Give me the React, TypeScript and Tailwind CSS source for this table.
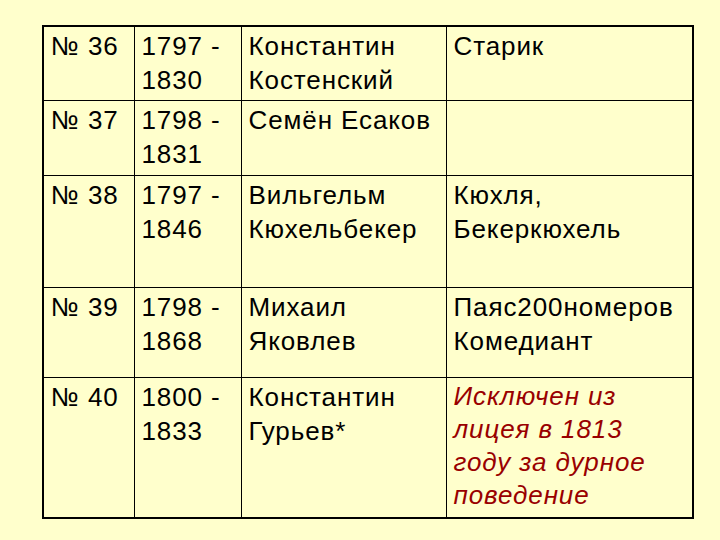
const rows = [
  { n: "№ 36", y: ["1797 -", "1830"], name: ["Константин", "Костенский"], nick: ["Старик"], h: "h-[74px]" },
  { n: "№ 37", y: ["1798 -", "1831"], name: ["Семён Есаков"], nick: [], h: "h-[75px]" },
  { n: "№ 38", y: ["1797 -", "1846"], name: ["Вильгельм", "Кюхельбекер"], nick: ["Кюхля,", "Бекеркюхель"], h: "h-[112px]" },
  { n: "№ 39", y: ["1798 -", "1868"], name: ["Михаил", "Яковлев"], nick: ["Паяс200номеров", "Комедиант"], h: "h-[90px]" },
];

function Lines({ items }: { items: string[] }) {
  return (
    <>
      {items.map((t, i) => (
        <div key={i} className="whitespace-nowrap">{t}</div>
      ))}
    </>
  );
}

export default function App() {
  const cell = "border border-black align-top pl-[7px] pt-[2px]";
  return (
    <div className="w-[720px] h-[540px] bg-[#ffffcc] pt-[25px] pl-[42px] text-black text-[26px] tracking-[0.9px] leading-[34px] font-['Liberation_Sans',Arial,sans-serif]">
      <table className="border-collapse border-2 border-black table-fixed w-[650px]">
        <colgroup>
          <col className="w-[91px]" />
          <col className="w-[107px]" />
          <col className="w-[205px]" />
          <col className="w-[247px]" />
        </colgroup>
        <tbody>
          {rows.map((r) => (
            <tr key={r.n} className={r.h}>
              <td className={cell}>{r.n}</td>
              <td className={cell}><Lines items={r.y} /></td>
              <td className={cell}><Lines items={r.name} /></td>
              <td className={cell}><Lines items={r.nick} /></td>
            </tr>
          ))}
          <tr className="h-[141px]">
            <td className={cell}>№ 40</td>
            <td className={cell}><Lines items={["1800 -", "1833"]} /></td>
            <td className={cell}><Lines items={["Константин", "Гурьев*"]} /></td>
            <td className={cell + " italic text-[#990000] leading-[33px]"}>
              <Lines items={["Исключен из", "лицея в 1813", "году за дурное", "поведение"]} />
            </td>
          </tr>
        </tbody>
      </table>
    </div>
  );
}
